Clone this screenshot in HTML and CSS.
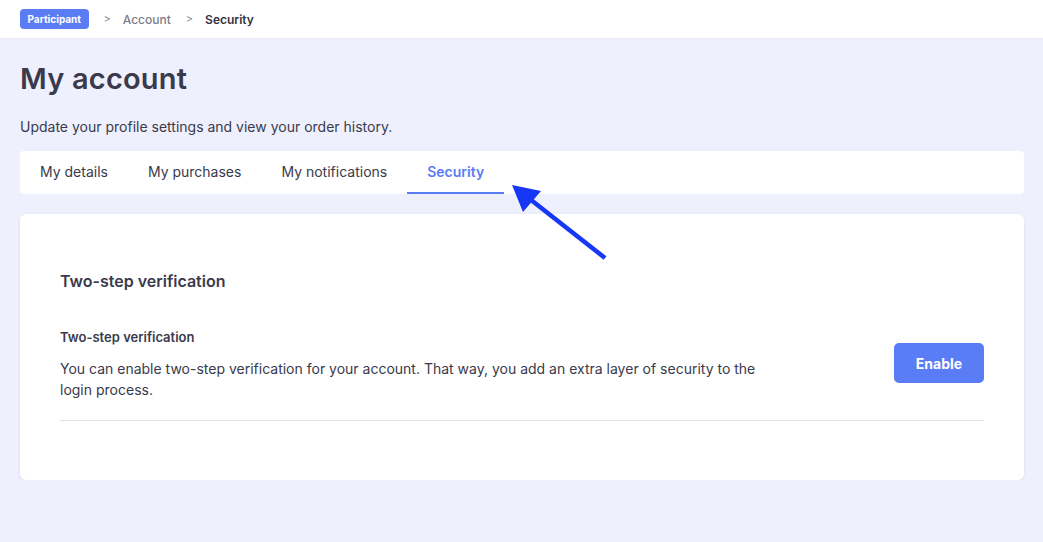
FILE: index.html
```html
<!DOCTYPE html>
<html lang="en">
<head>
    <meta charset="UTF-8">
    <title>My account - Security</title>
    <link rel="stylesheet" href="styles.css">
</head>
<body>
    <header class="topbar">
        <span class="badge">Participant</span>
        <span class="sep">&gt;</span>
        <span class="crumb">Account</span>
        <span class="sep">&gt;</span>
        <span class="crumb current">Security</span>
    </header>

    <main class="page">
        <h1>My account</h1>
        <p class="intro">Update your profile settings and view your order history.</p>

        <nav class="tabs">
            <a class="tab">My details</a>
            <a class="tab">My purchases</a>
            <a class="tab">My notifications</a>
            <a class="tab active">Security</a>
        </nav>

        <section class="card">
            <h2>Two-step verification</h2>
            <div class="setting">
                <div class="setting-text">
                    <h3>Two-step verification</h3>
                    <p>You can enable two-step verification for your account. That way, you add an extra layer of security to the login process.</p>
                </div>
                <button class="btn-enable">Enable</button>
            </div>
        </section>
    </main>

    <!-- annotation arrow -->
    <svg class="arrow" width="110" height="90" viewBox="0 0 110 90">
        <line x1="101" y1="80" x2="22" y2="18" stroke="#1637f5" stroke-width="4.5"/>
        <polygon points="8,7 37,13 19,34" fill="#1637f5"/>
    </svg>
</body>
</html>
```

FILE: styles.css
```css
body {
    margin: 0;
    font-family: Inter, "Noto Sans", sans-serif;
    background-color: #eff0fd;
    color: #3a3a4c;
}
.topbar {
    display: flex;
    align-items: center;
    height: 38px;
    padding: 0 20px;
    background: white;
    box-shadow: 0 1px 4px rgba(0,0,0,0.04);
    font-size: 12px;
}
.badge {
    background-color: #5a7cf5;
    color: white;
    font-size: 10px;
    font-weight: 700;
    padding: 4px 7.5px;
    border-radius: 4px;
}
.sep {
    color: #8a8a96;
    margin: 0 12px 0 15px;
    font-size: 11px;
}
.crumb {
    color: #7b7b86;
    font-weight: 500;
}
.crumb.current {
    color: #33333f;
    font-weight: 600;
}
.page {
    padding: 0 19px 0 20px;
}
h1 {
    margin: 23px 0 0;
    font-size: 29px;
    font-weight: 600;
    line-height: 36px;
    letter-spacing: 0.2px;
}
.intro {
    margin: 20px 0 0;
    font-size: 14px;
    line-height: 20px;
}
.tabs {
    display: flex;
    margin-top: 14px;
    height: 43px;
    background: white;
    border-radius: 4px;
}
.tab {
    display: flex;
    align-items: center;
    padding: 0 20px;
    font-size: 14px;
    color: #3a3a4c;
    cursor: pointer;
    border-bottom: 2px solid transparent;
}
.tab.active {
    color: #5a7cf5;
    font-weight: 600;
    border-bottom-color: #5a7cf5;
}
.card {
    margin-top: 20px;
    background: white;
    border-radius: 6px;
    box-shadow: 0 1px 3px rgba(60,60,120,0.12);
    padding: 56px 40px 59px;
}
h2 {
    margin: 0;
    font-size: 16px;
    font-weight: 600;
    line-height: 22px;
}
.setting {
    display: flex;
    align-items: flex-start;
    justify-content: space-between;
    margin-top: 35px;
    padding-bottom: 20px;
    border-bottom: 1px solid #e3e3ec;
}
.setting-text {
    max-width: 720px;
}
h3 {
    margin: 0;
    font-size: 13px;
    font-weight: 600;
    line-height: 20px;
}
.setting-text p {
    margin: 11px 0 0;
    font-size: 14px;
    line-height: 21px;
}
.btn-enable {
    width: 90px;
    height: 40px;
    border: none;
    border-radius: 5px;
    background-color: #5a7cf5;
    color: white;
    font-family: inherit;
    font-size: 14px;
    font-weight: 700;
    cursor: pointer;
    margin-top: 16px;
}
.arrow {
    position: absolute;
    left: 504px;
    top: 178px;
}
```
